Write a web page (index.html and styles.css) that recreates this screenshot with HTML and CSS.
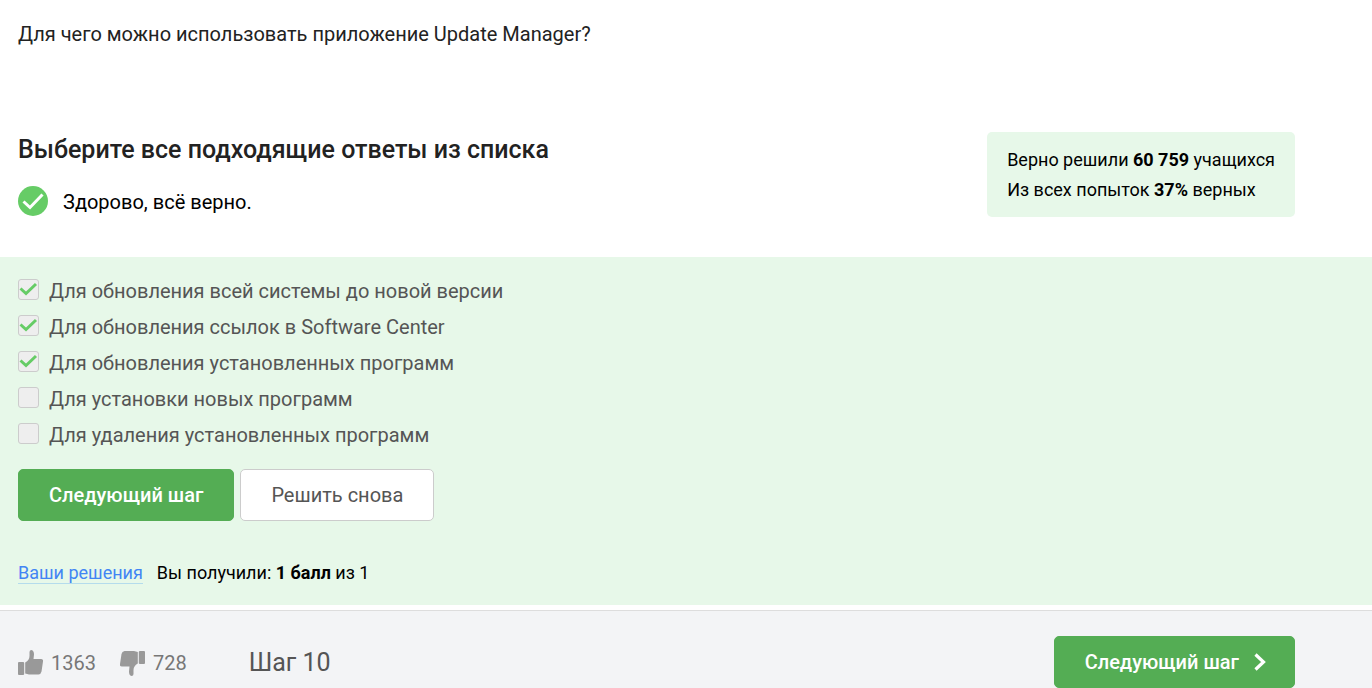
FILE: index.html
```html
<!DOCTYPE html>
<html lang="ru">
<head>
<meta charset="utf-8">
<meta name="viewport" content="width=device-width, initial-scale=1">
<title>Шаг 10</title>
<link rel="stylesheet" href="styles.css">
</head>
<body>
<main>
  <p class="question">Для чего можно использовать приложение Update Manager?</p>
  <section class="intro">
    <div class="intro-main">
      <h2 class="title">Выберите все подходящие ответы из списка</h2>
      <div class="status">
        <svg class="status-icon" viewBox="0 0 30 30" aria-hidden="true"><circle cx="15" cy="15" r="15" fill="#66cc66"/><path d="M5.500 15.500 12 21.500 24.500 8.500" fill="none" stroke="#fff" stroke-width="3"/></svg>
        <span>Здорово, всё верно.</span>
      </div>
    </div>
    <aside class="stats">
      <div>Верно решили <b>60 759</b> учащихся</div>
      <div>Из всех попыток <b>37%</b> верных</div>
    </aside>
  </section>
  <form class="quiz">
    <div class="options">
      <label class="option"><input type="checkbox" checked disabled><span>Для обновления всей системы до новой версии</span></label>
      <label class="option"><input type="checkbox" checked disabled><span>Для обновления ссылок в Software Center</span></label>
      <label class="option"><input type="checkbox" checked disabled><span>Для обновления установленных программ</span></label>
      <label class="option"><input type="checkbox" disabled><span>Для установки новых программ</span></label>
      <label class="option"><input type="checkbox" disabled><span>Для удаления установленных программ</span></label>
    </div>
    <div class="actions">
      <button class="btn btn-primary" type="button">Следующий шаг</button>
      <button class="btn btn-plain" type="button">Решить снова</button>
    </div>
    <div class="result">
      <a class="solutions" href="#">Ваши решения</a>
      <span>Вы получили: <b>1 балл</b> из 1</span>
    </div>
  </form>
</main>
<footer class="footer">
  <div class="votes">
    <button class="vote" type="button" aria-label="Нравится: 1363">
      <svg class="thumb" viewBox="0 0 26 26" aria-hidden="true"><path d="M1 12h4q1.200 0 1.200 1v11q0 1-1.200 1H1q-1 0-1-1V13q0-1 1-1zM7.200 12.500Q11.500 10 11.500 6V2Q11.500 0 13.500 0 16 .5 16 4.500L15.500 9H23q2.500 0 2 2.500L23.500 21.500Q23 24 20.500 24.500H11L7.200 23.500z" fill="#999"/></svg>
      <span>1363</span>
    </button>
    <button class="vote" type="button" aria-label="Не нравится: 728">
      <svg class="thumb" viewBox="0 0 26 26" aria-hidden="true"><path d="M24 14h-4q-1.200 0-1.200-1V2q0-1 1.200-1h4q1 0 1 1v11q0 1-1 1zM17.800 13.500Q13.500 16 13.500 20v4Q13.500 26 11.500 26 9 25.500 9 21.500L9.500 16.500H2Q-.5 16.500 0 14L1.500 4Q2 1.500 4.500 1H14l3.800 1z" fill="#999"/></svg>
      <span>728</span>
    </button>
  </div>
  <div class="step">Шаг 10</div>
  <button class="btn btn-primary btn-next" type="button"><span>Следующий шаг</span><svg class="chevron" viewBox="0 0 12 18" aria-hidden="true"><path d="M1.500 1.500 9.500 9 1.500 16.500" fill="none" stroke="#fff" stroke-width="3.200"/></svg></button>
</footer>
</body>
</html>
```
FILE: styles.css
```css
* { box-sizing: border-box; }
body {
  margin: 0;
  background: #fff;
  color: #000;
  font-family: Roboto, "Liberation Sans", sans-serif;
  font-size: 20px;
  line-height: 30px;
}
.question { margin: 0; padding: 19px 77px 83px 18px; color: #222; }
.intro {
  display: flex;
  justify-content: space-between;
  align-items: flex-start;
  padding: 0 77px 39px 18px;
}
.title {
  margin: 0;
  color: #222;
  font-size: 25px;
  font-weight: 500;
  line-height: 36px;
}
.status { display: flex; align-items: flex-start; gap: 15px; margin-top: 18px; line-height: 32px; }
.status-icon { width: 30px; height: 30px; }
.stats {
  padding: 13px 20px 12px;
  border-radius: 5px;
  background: #e7f8e9;
  font-size: 18px;
}
.quiz { padding: 16px 77px 17px 18px; background: #e7f8e9; }
.option {
  display: flex;
  align-items: flex-start;
  gap: 10px;
  height: 36px;
  color: #555;
  line-height: 36px;
}
.option input {
  appearance: none;
  width: 21px;
  height: 21px;
  margin: 6px 0 0;
  border: 1px solid #ccc;
  border-radius: 3px;
  background: #eee;
}
.option input:checked {
  background: #eee url("data:image/svg+xml,%3Csvg xmlns='http://www.w3.org/2000/svg' viewBox='0 0 19 19'%3E%3Cpath d='M1.500 8.500 7 13.500 17 4' fill='none' stroke='%2366cc66' stroke-width='3'/%3E%3C/svg%3E") center / 100% no-repeat;
}
.actions { display: flex; gap: 6px; margin-top: 16px; }
.btn {
  height: 52px;
  padding: 0 30px;
  border: 1px solid #54ad54;
  border-radius: 5px;
  font: inherit;
}
.btn-primary { background: #54ad54; color: #fff; font-weight: 500; }
.btn-plain { background: #fff; border-color: #ccc; color: #555; }
.result {
  display: flex;
  align-items: center;
  gap: 14px;
  margin-top: 37px;
  font-size: 18px;
}
.solutions {
  border-bottom: 1px solid #b4dcec;
  color: #4285f4;
  line-height: 20px;
  text-decoration: none;
}
.footer {
  display: flex;
  align-items: center;
  margin-top: 5px;
  padding: 25px 77px 0 18px;
  border-top: 1px solid #ddd;
  background: #f3f4f6;
}
.votes { display: flex; gap: 24px; }
.vote {
  display: flex;
  align-items: center;
  gap: 7px;
  padding: 2px 0 0;
  border: 0;
  background: none;
  color: #777;
  font: inherit;
}
.thumb { width: 26px; height: 26px; }
.step { margin-left: 62px; padding-top: 2px; color: #555; font-size: 25px; }
.btn-next { display: flex; align-items: center; gap: 15px; margin-left: auto; padding-right: 28px; }
.chevron { width: 12px; height: 18px; }
```
